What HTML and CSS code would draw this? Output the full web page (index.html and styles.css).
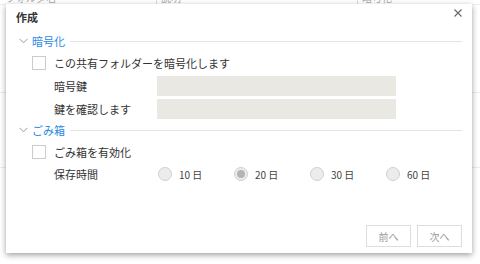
FILE: index.html
```html
<!DOCTYPE html>
<html lang="ja">
<head>
<meta charset="utf-8">
<link rel="stylesheet" href="styles.css">
</head>
<body>
<div class="page">
  <div class="bg-head">
    <div class="bg-col c1">フォルダ名</div>
    <div class="bg-col c2">説明</div>
    <div class="bg-col c3">暗号化</div>
  </div>
  <div class="bg-row r1"></div>
  <div class="bg-row r2"></div>
</div>
<div class="dialog">
  <div class="title">
    <span>作成</span>
    <svg class="close" width="8" height="8" viewBox="0 0 8 8"><path d="M0.5 0.5L7.5 7.5M7.5 0.5L0.5 7.5" stroke="#666" stroke-width="1.1" fill="none"/></svg>
  </div>
  <div class="section-head">
    <svg class="chev" width="9" height="6" viewBox="0 0 9 6"><path d="M0.5 0.8L4.5 4.8L8.5 0.8" stroke="#999" stroke-width="1" fill="none"/></svg>
    <span class="sec-title">暗号化</span>
    <span class="sec-line"></span>
  </div>
  <div class="check-row">
    <span class="box"></span><span>この共有フォルダーを暗号化します</span>
  </div>
  <div class="field-row first">
    <span class="label">暗号鍵</span><span class="input"></span>
  </div>
  <div class="field-row">
    <span class="label">鍵を確認します</span><span class="input"></span>
  </div>
  <div class="section-head">
    <svg class="chev" width="9" height="6" viewBox="0 0 9 6"><path d="M0.5 0.8L4.5 4.8L8.5 0.8" stroke="#999" stroke-width="1" fill="none"/></svg>
    <span class="sec-title">ごみ箱</span>
    <span class="sec-line"></span>
  </div>
  <div class="check-row">
    <span class="box"></span><span>ごみ箱を有効化</span>
  </div>
  <div class="radio-row">
    <span class="label">保存時間</span>
    <div class="radios">
      <span class="opt"><span class="radio"></span>10 日</span>
      <span class="opt"><span class="radio on"></span>20 日</span>
      <span class="opt"><span class="radio"></span>30 日</span>
      <span class="opt"><span class="radio"></span>60 日</span>
    </div>
  </div>
  <div class="footer">
    <span class="btn">前へ</span>
    <span class="btn">次へ</span>
  </div>
</div>
</body>
</html>
```
FILE: styles.css
```css
html, body {
  margin: 0;
  padding: 0;
}
body {
  width: 480px;
  height: 264px;
  overflow: hidden;
  position: relative;
  background: #fff;
  font-family: "Noto Sans CJK JP", "Noto Sans", sans-serif;
  color: #333;
  font-size: 11px;
}
.page {
  width: 480px;
}
.bg-head {
  display: flex;
  height: 12px;
  margin-top: -8px;
  border-bottom: 1px solid #eee;
  color: #aaa;
  font-size: 10px;
  line-height: 12px;
}
.bg-col {
  padding-left: 4px;
  border-right: 1px solid #ddd;
}
.c1 { width: 150px; padding-left: 6px; }
.c2 { width: 196px; }
.c3 { flex: 1; border-right: none; }
.bg-row {
  border-bottom: 1px solid #eee;
}
.r1 { height: 87px; }
.r2 { height: 74px; }

.dialog {
  position: absolute;
  left: 6px;
  top: 4px;
  width: 466px;
  height: 249px;
  background: #fff;
  box-shadow: 0 2px 6px rgba(0,0,0,0.38);
  display: flex;
  flex-direction: column;
  box-sizing: border-box;
  padding: 0 10px 6px 0;
}
.title {
  height: 26px;
  display: flex;
  align-items: center;
  justify-content: space-between;
  padding-left: 10px;
  font-weight: bold;
  color: #333;
  font-size: 11px;
}
.close {
  margin-right: 0;
  margin-top: -8px;
}
.section-head {
  height: 22px;
  display: flex;
  align-items: center;
  padding-left: 13px;
}
.chev {
  margin-right: 4px;
}
.sec-title {
  color: #2a8ae4;
  font-size: 11px;
}
.sec-line {
  flex: 1;
  height: 1px;
  background: #e4e4e4;
  margin-left: 5px;
}
.check-row {
  height: 22px;
  display: flex;
  align-items: center;
  padding-left: 26px;
  color: #333;
}
.box {
  width: 12px;
  height: 12px;
  border: 1px solid #ccc;
  background: #fff;
  margin-right: 8px;
}
.field-row {
  height: 20px;
  display: flex;
  align-items: center;
  padding-left: 48px;
  margin-top: 3px;
}
.field-row.first {
  margin-top: 2px;
}
.label {
  width: 103px;
  color: #333;
}
.input {
  width: 239px;
  height: 20px;
  background: #e9e8e2;
}
.section-head:nth-of-type(5) {
  margin-top: 2px;
}
.radio-row {
  height: 22px;
  display: flex;
  align-items: center;
  padding-left: 48px;
}
.radios {
  display: flex;
  padding-left: 3px;
}
.opt {
  width: 76px;
  display: flex;
  align-items: center;
  font-size: 10px;
  color: #444;
}
.radio {
  width: 12px;
  height: 12px;
  border-radius: 50%;
  border: 1px solid #d0d0d0;
  background: #ececec;
  margin-right: 7px;
  position: relative;
}
.radio.on::after {
  content: "";
  position: absolute;
  left: 2px;
  top: 2px;
  width: 8px;
  height: 8px;
  border-radius: 50%;
  background: #b4b4b4;
}
.footer {
  margin-top: auto;
  display: flex;
  justify-content: flex-end;
  gap: 6px;
}
.btn {
  width: 43px;
  height: 20px;
  border: 1px solid #ddd;
  display: flex;
  align-items: center;
  justify-content: center;
  color: #999;
  font-size: 10px;
}
```
